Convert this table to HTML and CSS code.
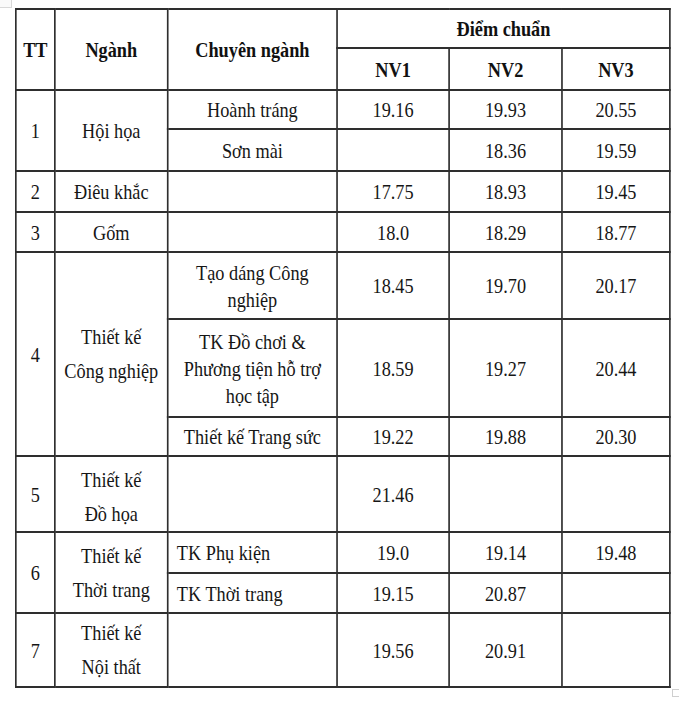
FILE: index.html
```html
<!DOCTYPE html>
<html lang="vi">
<head>
<meta charset="utf-8">
<title>Điểm chuẩn</title>
<link rel="stylesheet" href="styles.css">
</head>
<body>
<div class="page">
  <span class="move-handle"></span>
  <div class="frame">
    <table class="grid">
      <colgroup>
        <col class="c-tt"><col class="c-ng"><col class="c-cn"><col class="c-nv1"><col class="c-nv2"><col class="c-nv3">
      </colgroup>
      <thead>
        <tr class="h1"><th rowspan="2">TT</th><th rowspan="2">Ngành</th><th rowspan="2">Chuyên ngành</th><th colspan="3">Điểm chuẩn</th></tr>
        <tr class="h2"><th>NV1</th><th>NV2</th><th>NV3</th></tr>
      </thead>
      <tbody>
        <tr class="r39"><td rowspan="2">1</td><td rowspan="2">Hội họa</td><td>Hoành tráng</td><td>19.16</td><td>19.93</td><td>20.55</td></tr>
        <tr class="r42"><td>Sơn mài</td><td></td><td>18.36</td><td>19.59</td></tr>
        <tr class="r41"><td>2</td><td>Điêu khắc</td><td></td><td>17.75</td><td>18.93</td><td>19.45</td></tr>
        <tr class="r40"><td>3</td><td>Gốm</td><td></td><td>18.0</td><td>18.29</td><td>18.77</td></tr>
        <tr class="r67"><td rowspan="3">4</td><td rowspan="3" class="tall">Thiết kế<br>Công nghiệp</td><td>Tạo dáng Công<br>nghiệp</td><td>18.45</td><td>19.70</td><td>20.17</td></tr>
        <tr class="r98"><td>TK Đồ chơi &amp;<br>Phương tiện hỗ trợ<br>học tập</td><td>18.59</td><td>19.27</td><td>20.44</td></tr>
        <tr class="r39"><td>Thiết kế Trang sức</td><td>19.22</td><td>19.88</td><td>20.30</td></tr>
        <tr class="r76"><td>5</td><td class="tall low">Thiết kế<br>Đồ họa</td><td></td><td>21.46</td><td></td><td></td></tr>
        <tr class="r41"><td rowspan="2">6</td><td rowspan="2" class="tall">Thiết kế<br>Thời trang</td><td class="left">TK Phụ kiện</td><td>19.0</td><td>19.14</td><td>19.48</td></tr>
        <tr class="r40"><td class="left">TK Thời trang</td><td>19.15</td><td>20.87</td><td></td></tr>
        <tr class="r74"><td>7</td><td class="tall">Thiết kế<br>Nội thất</td><td></td><td>19.56</td><td>20.91</td><td></td></tr>
      </tbody>
    </table>
  </div>
  <span class="resize-handle"></span>
</div>
</body>
</html>
```

FILE: styles.css
```css
html, body {
  margin: 0;
  padding: 0;
  background: #ffffff;
  overflow: hidden;
}

.page {
  position: relative;
  width: 679px;
  height: 701px;
  box-sizing: border-box;
  padding: 8px 0 0 15px;
  font-family: "Liberation Serif", "Times New Roman", serif;
  color: #161616;
}

.frame {
  width: 656px;
}

.grid {
  border-collapse: collapse;
  table-layout: fixed;
  width: 788px;
  transform: scaleX(0.83);
  transform-origin: 0 0;
  font-size: 22px;
  line-height: 27px;
}

.c-tt { width: 47px; }
.c-ng { width: 136px; }
.c-cn { width: 204px; }
.c-nv1 { width: 135px; }
.c-nv2 { width: 136px; }
.c-nv3 { width: 130px; }

.grid th,
.grid td {
  border: 2px solid #2e2e2e;
  padding: 0 3px;
  text-align: center;
  vertical-align: middle;
  white-space: nowrap;
}

.grid th {
  font-weight: bold;
  color: #111111;
}

.grid td.left {
  text-align: left;
  padding-left: 10px;
}

.grid td.tall {
  line-height: 34px;
}

.grid td.low {
  padding-top: 6px;
}

.h1 { height: 39px; }
.h2 { height: 42px; }
.r39 { height: 39px; }
.r40 { height: 40px; }
.r41 { height: 41px; }
.r42 { height: 42px; }
.r67 { height: 67px; }
.r74 { height: 74px; }
.r76 { height: 76px; }
.r98 { height: 98px; }

.move-handle {
  position: absolute;
  left: 0;
  top: 0;
  width: 11px;
  height: 7px;
  border-right: 1px solid #d8d8d8;
  border-bottom: 1px solid #d8d8d8;
  background: #fafafa;
}

.resize-handle {
  position: absolute;
  left: 672px;
  top: 689px;
  width: 6px;
  height: 6px;
  border: 1px solid #cfcfcf;
  background: #ffffff;
}
```
